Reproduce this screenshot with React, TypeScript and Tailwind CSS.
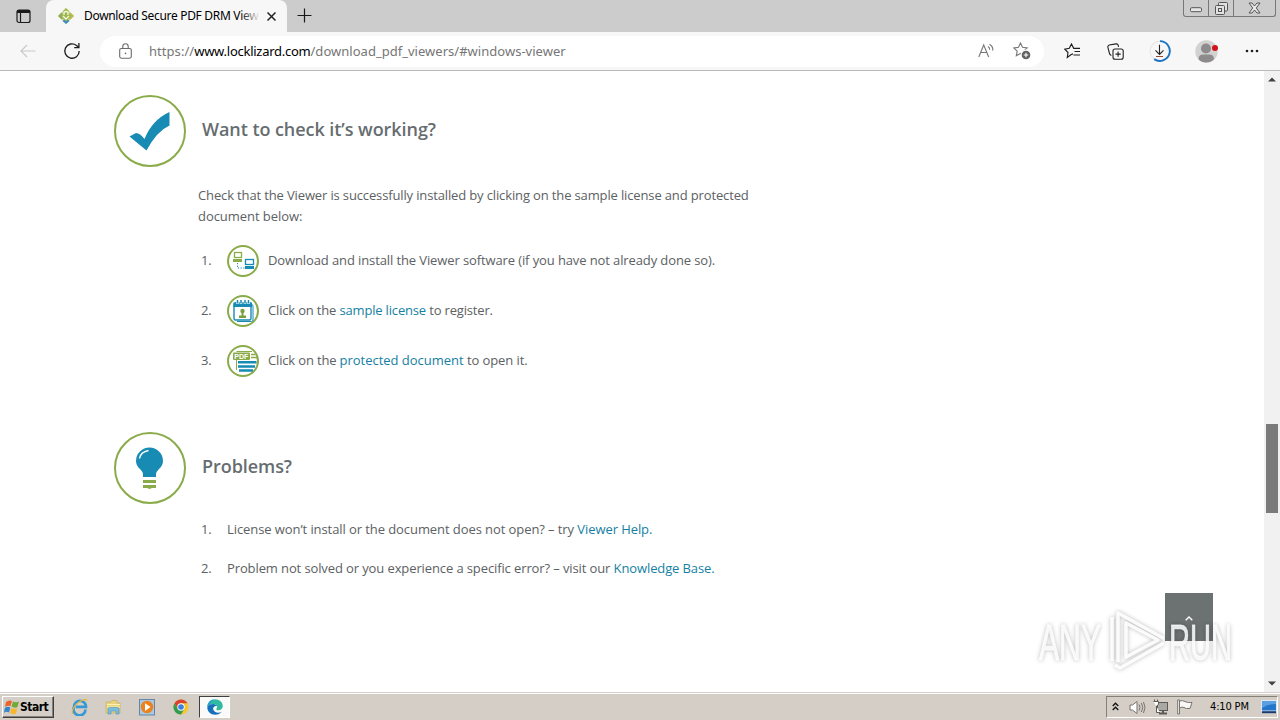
import React from "react";

const ui = "font-['Noto_Sans','Open_Sans',sans-serif]";
const tahoma = "font-['DejaVu_Sans_Condensed','DejaVu_Sans',sans-serif]";

function TabStrip() {
  return (
    <div className="flex h-8 shrink-0 bg-[#cccccc]">
      <div className="flex h-8 w-[46px] justify-end rounded-br-lg pr-[15px] pt-[9px]">
        <svg width="15" height="15" viewBox="0 0 15 15" fill="none" stroke="#1a1a1a" strokeWidth="1.2">
          <rect x="1" y="1" width="13" height="12.5" rx="2" />
          <path d="M1 2.500h13" strokeWidth="3" />
          <path d="M4.500 4v9" />
        </svg>
      </div>
      <div className="flex h-8 w-[241px] items-center rounded-t-lg bg-[#f7f7f7] pl-3">
        <svg width="16" height="16" viewBox="0 0 16 16" className="shrink-0">
          <path d="M8 0l8 8-8 8-8-8z" fill="#c5d493" />
          <path d="M8 0l3 3-3 3-3-3z" fill="#a5bd4c" />
          <path d="M3.500 4.500L7 8l-3.500 3.500L0 8z" fill="#8fae55" />
          <path d="M12.500 4.500L16 8l-3.500 3.500L9 8z" fill="#b9bf4d" />
          <path d="M8 10l3.500 3-3.500 3-3.500-3z" fill="#3d8cc0" />
          <path d="M8 2.500L13.500 8 8 13.500 2.500 8z" fill="#9cb653" />
          <path d="M6 7V5.500a2 2 0 014 0V7M5 8l3 3 3-3" stroke="#f4f7dc" strokeWidth="1.300" fill="none" />
        </svg>
        <div className={`relative ml-[10px] h-5 w-[176px] overflow-hidden whitespace-nowrap text-[12px] leading-[19px] tracking-[-0.32px] text-black ${ui}`}>
          Download Secure PDF DRM View
          <div className="absolute right-0 top-0 h-5 w-5 bg-gradient-to-r from-transparent to-[#f7f7f7]" />
        </div>
        <svg width="9" height="9" viewBox="0 0 9 9" stroke="#222" strokeWidth="1.500" className="ml-[7px] mt-px">
          <path d="M.5.5l8 8M8.500.5l-8 8" />
        </svg>
      </div>
      <div className="pl-[10px] pt-[8px]">
        <svg width="15" height="15" viewBox="0 0 15 15" stroke="#1a1a1a" strokeWidth="1.200">
          <path d="M7.500.5v14M.5 7.500h14" />
        </svg>
      </div>
      <div className="grow" />
      <div className="mr-1 flex h-[17px] w-[93px] rounded-b-[3px] border border-t-0 border-[#777] text-[#555]">
        <div className="flex w-[25px] items-center justify-center border-r border-[#777]">
          <svg width="13" height="6" viewBox="0 0 13 6" className="mt-1"><rect x=".5" y=".7" width="11" height="4" rx="1.200" fill="#e7e7e7" stroke="#555" /></svg>
        </div>
        <div className="flex w-[25px] items-center justify-center border-r border-[#777]">
          <svg width="13" height="13" viewBox="0 0 13 13" fill="#e2e2e2" stroke="#555">
            <rect x="3.500" y=".5" width="9" height="8.500" rx="1" />
            <rect x=".5" y="3.500" width="9" height="9" rx="1" />
            <rect x="3.500" y="6.500" width="3" height="3" />
          </svg>
        </div>
        <div className="flex grow items-center justify-center">
          <svg width="13" height="12" viewBox="0 0 13 12"><path d="M1 1h3l2.500 3L9 1h3L8.300 6l3.700 5H9L6.500 8 4 11H1l3.700-5z" fill="#e7e7e7" stroke="#555" /></svg>
        </div>
      </div>
    </div>
  );
}

const star = "M7.500 1l2 4.300 4.700.6-3.500 3.200.9 4.700-4.100-2.300-4.200 2.300.9-4.700L.8 5.900l4.700-.6z";

function Toolbar() {
  return (
    <div className="flex h-[39px] shrink-0 items-center border-b border-[#b9b9b9] bg-[#f7f7f7]">
      <svg width="16" height="14" viewBox="0 0 16 14" className="ml-5" fill="none" stroke="#c9c9c9" strokeWidth="1.200"><path d="M15.500 7H1M7 1L1 7l6 6" /></svg>
      <svg width="18" height="18" viewBox="0 0 18 18" className="ml-[27px]" fill="none" stroke="#1f1f1f" strokeWidth="1.300"><path d="M16.200 9A7.200 7.200 0 1 1 13.500 3.400L15.800 5.500M15.900 1v4.700h-4.700" /></svg>
      <div className="ml-[19px] flex h-[31px] w-[944px] items-center rounded-full bg-white pl-[19px]">
        <svg width="13" height="16" viewBox="0 0 13 16" fill="none" stroke="#6b6b6b" strokeWidth="1.100"><rect x=".7" y="5.500" width="11.600" height="9.700" rx="1.600" /><path d="M3.800 5.500V3.500a2.700 2.700 0 015.400 0v2" /><circle cx="6.500" cy="10.400" r=".8" fill="#6b6b6b" stroke="none" /></svg>
        <div className={`ml-[17px] w-[600px] whitespace-nowrap text-[13px] leading-5 text-[#767676] ${ui}`}>
          <span className="tracking-[0.05px]">https://</span>
          <span className="tracking-[-0.26px] text-black">www.locklizard.com</span>
          <span className="tracking-[0.02px]">/download_pdf_viewers/#windows-viewer</span>
        </div>
        <svg width="17" height="16" viewBox="0 0 17 16" className="ml-[229px]" fill="none" stroke="#777" strokeWidth="1.100"><path d="M.8 14L5.700 2l5 12M2.700 9.500h6.200M10 3.500q2 1.300 1.700 3.300M11.500 1.200q4 2.500 3.200 6.500" /></svg>
        <svg width="18" height="18" viewBox="0 0 18 18" className="ml-[18px]" fill="none" stroke="#777" strokeWidth="1.100"><path d={star} /><circle cx="13" cy="13" r="4.900" fill="#5f5f5f" stroke="#fff" /><path d="M13 10.700v4.600M10.700 13h4.600" stroke="#fff" /></svg>
      </div>
      <svg width="17" height="16" viewBox="0 0 17 16" className="ml-5" fill="none" stroke="#1f1f1f" strokeWidth="1.150"><path d="M9 10.900L7.200 11.500 3.300 14.500 4 9.500.8 6.200 5.300 5.300 7.500 1l2.200 4.300H16M10.500 8.500H16M9.500 12H16" /></svg>
      <svg width="17" height="17" viewBox="0 0 17 17" className="ml-[26px]" fill="none" stroke="#1f1f1f" strokeWidth="1.100"><rect x="6" y="6" width="10.200" height="10.200" rx="2" /><path d="M11.100 8.500v5.200M8.500 11.100h5.200M4.300 12.700L2.600 11 .9 4.300Q.6 2.600 2.200 2L9 .9q1.700-.3 2.200 1.300l.3 1.600" /></svg>
      <svg width="22" height="22" viewBox="0 0 22 22" className="ml-[25px]" fill="none"><circle cx="11" cy="11" r="9.900" stroke="#e7e7e7" strokeWidth="1.200" /><path d="M11 1.100a9.900 9.900 0 11-5.800 18" stroke="#1873c4" strokeWidth="1.900" /><path d="M10.500 4.700v9.500M6.500 10.400l4 4 4-4" stroke="#222" strokeWidth="1.100" /><path d="M7 16.500h7" stroke="#9c4539" /></svg>
      <svg width="24" height="23" viewBox="0 0 24 23" className="ml-[24px]"><circle cx="11.500" cy="11.500" r="11.200" fill="#d2d2d0" /><circle cx="11" cy="8.500" r="5" fill="#8d8b8c" /><path d="M3.500 19.200q0-4.700 4.500-4.700h6.500q4.500 0 4.500 4.700-3.500 3.300-8 3.300t-7.500-3.300z" fill="#8d8b8c" /><circle cx="20" cy="8" r="3" fill="#d3111c" /></svg>
      <svg width="14" height="4" viewBox="0 0 14 4" className="ml-[26px]" fill="#1d1d1d"><circle cx="2" cy="2" r="1.300" /><circle cx="7" cy="2" r="1.300" /><circle cx="12" cy="2" r="1.300" /></svg>
    </div>
  );
}

function Ring({ children }: { children: React.ReactNode }) {
  return (
    <svg width="32" height="32" viewBox="0 0 32 32" className="mr-[9px] shrink-0">
      <circle cx="16" cy="16" r="15" fill="#fff" stroke="#8aab49" strokeWidth="2" />
      {children}
    </svg>
  );
}

function Num({ n }: { n: number }) {
  return <span className="w-[26px] shrink-0 tracking-[-0.3px]">{n}.</span>;
}

function Link({ children }: { children: string }) {
  return <span className="text-[#167fa3]">{children}</span>;
}

function Page() {
  return (
    <main className="grow pl-[114px] pt-6 font-['Open_Sans',sans-serif] text-[13px] leading-[21px] text-[#5c6163]">
      <section className="h-[337px]">
        <div className="flex h-[72px] items-center">
          <svg width="72" height="72" viewBox="0 0 72 72">
            <circle cx="36" cy="36" r="35" fill="none" stroke="#8aab49" strokeWidth="2" />
            <path d="M15.500 41.500L22 38Q26 38 30.500 44 38 25 55.500 17V30.500Q43 36 32.500 55.500z" fill="#178bb3" />
          </svg>
          <h2 className="ml-4 pb-1 text-[18px] font-semibold leading-6 tracking-[-0.06px] text-[#666d70]">Want to check it’s working?</h2>
        </div>
        <p className="ml-[84px] mt-[18px] w-[580px] tracking-[-0.137px]">
          Check that the Viewer is successfully installed by clicking on the sample license and protected
          <br />
          <span className="tracking-[-0.05px]">document below:</span>
        </p>
        <ol className="ml-[87px] mt-[18px] flex flex-col gap-[18px]">
          <li className="flex h-8 items-center">
            <div className="pb-[2px]"><div className="flex w-[26px]"><Num n={1} /></div></div>
            <Ring>
              <g fill="none" stroke="#8aab49"><rect x="7.500" y="7.500" width="7" height="5" strokeWidth="1.300" /><path d="M6 15.500h9" strokeWidth="3" /></g>
              <g fill="none" stroke="#178bb3"><rect x="18.500" y="14.500" width="8" height="5" strokeWidth="1.300" /><path d="M18 22.500h9" strokeWidth="3" /><path d="M10.500 18v5H18" strokeDasharray="1.200 1.500" /></g>
            </Ring>
            <span className="pb-[2px] tracking-[-0.11px]">Download and install the Viewer software (if you have not already done so).</span>
          </li>
          <li className="flex h-8 items-center">
            <div className="pb-[2px]"><div className="flex w-[26px]"><Num n={2} /></div></div>
            <Ring>
              <rect x="7" y="8" width="17" height="17" rx="1.500" fill="#fff" stroke="#178bb3" strokeWidth="1.400" />
              <path d="M24.500 9.500q1.500 0 1.500 1.500v14q0 1.500-1.500 1.500H10" fill="none" stroke="#178bb3" />
              <path d="M6.500 7.500H25v4.500H6.500z" fill="#178bb3" />
              <path d="M10.500 4v5M14 4v5M18 4v5M21.500 4v5" stroke="#fff" strokeWidth="2.500" />
              <path d="M10.500 5v3.500M14 5v3.500M18 5v3.500M21.500 5v3.500" stroke="#178bb3" strokeWidth="1.500" />
              <circle cx="15.500" cy="16" r="2.200" fill="#7c9f3d" /><path d="M12 23v-2.500h2.500V18h2v2.500H19V23z" fill="#7c9f3d" />
            </Ring>
            <span className="whitespace-pre pb-[2px] tracking-[-0.17px]">Click on the <Link>sample license</Link> to register.</span>
          </li>
          <li className="flex h-8 items-center">
            <div className="pb-[2px]"><div className="flex w-[26px]"><Num n={3} /></div></div>
            <Ring>
              <path d="M9.500 14v11M9.500 6.500H25" stroke="#8aab49" fill="none" />
              <rect x="6" y="7.500" width="17" height="7.500" rx="1" fill="#8aab49" />
              <text x="7.300" y="13.700" fontSize="7" fontWeight="700" textLength="14" lengthAdjust="spacingAndGlyphs" fill="#fff" className="font-['Liberation_Sans',sans-serif]">PDF</text>
              <path d="M24 9.500h4.500M24 12.500h6" stroke="#8aab49" strokeWidth="1.300" />
              <path d="M11 17.300h18.500M11 21.500h17M12 25.500h14" stroke="#178bb3" strokeWidth="2.400" />
            </Ring>
            <span className="whitespace-pre pb-[2px] tracking-[-0.09px]"><span className="tracking-[-0.16px]">Click on the </span><span className="tracking-[-0.02px]"><Link>protected document</Link></span> to open it.</span>
          </li>
        </ol>
      </section>
      <section>
        <div className="flex h-[72px] items-center">
          <svg width="72" height="72" viewBox="0 0 72 72">
            <circle cx="36" cy="36" r="35" fill="none" stroke="#8aab49" strokeWidth="2" />
            <path d="M29 45v-3q0-2-3-5-4-3.500-4-8a13.500 13.500 0 0127 0q0 4.500-4 8-3 3-3 5v3z" fill="#178bb3" />
            <path d="M25.500 26.500q1-6.500 9-8" fill="none" stroke="#fff" strokeWidth="1.500" />
            <path d="M29 48h13v3H29zM29 53h13v3h-4l-2.500 1L33 56h-4z" fill="#8aab49" />
          </svg>
          <h2 className="ml-4 pb-1 text-[18px] font-semibold leading-6 tracking-[-0.06px] text-[#666d70]">Problems?</h2>
        </div>
        <ol className="ml-[87px] mt-[15px] flex flex-col gap-[18px]">
          <li className="flex"><Num n={1} /><span className="whitespace-pre tracking-[-0.08px]">License won’t install or the document does not open? – try <Link>Viewer Help.</Link></span></li>
          <li className="flex"><Num n={2} /><span className="whitespace-pre tracking-[-0.11px]">Problem not solved or you experience a specific error? – visit our <Link>Knowledge Base.</Link></span></li>
        </ol>
      </section>
    </main>
  );
}

function Scrollbar() {
  return (
    <div className="flex w-4 shrink-0 flex-col items-center bg-[#f1f1f1]">
      <svg width="8" height="5" viewBox="0 0 8 5" className="mt-[6px]"><path d="M0 4.500L4 .5l4 4z" fill="#404040" /></svg>
      <div className="mt-[342px] h-[89px] w-3 bg-[#7b7b7b]" />
      <div className="grow" />
      <svg width="8" height="5" viewBox="0 0 8 5" className="mb-[6px]"><path d="M0 0.500h8l-4 4z" fill="#404040" /></svg>
    </div>
  );
}

function Watermark() {
  return (
    <div className="absolute left-[1037px] top-[605px] h-[70px] w-[205px] drop-shadow-[0_0_2px_rgba(0,0,0,0.3)]">
      <svg width="205" height="70" viewBox="0 0 205 70" className="font-['Liberation_Sans_Narrow','Liberation_Sans',sans-serif]">
        <g fill="#ffffff" fillOpacity=".85" stroke="#fff" strokeOpacity=".7" strokeWidth="1" fontSize="50">
          <text x="2" y="55" textLength="62" lengthAdjust="spacingAndGlyphs">ANY</text>
          <text x="132" y="55" textLength="63" lengthAdjust="spacingAndGlyphs">RUN</text>
        </g>
        <g fill="none" stroke="#fff" strokeOpacity=".9" strokeWidth="3.500" strokeLinejoin="round">
          <path d="M89 18l32 17-32 17z" />
          <path d="M81 57V8l46 25.500" />
          <path d="M127 38L83 63l-5-3" />
          <path d="M75 12v44" />
        </g>
      </svg>
    </div>
  );
}

function Taskbar() {
  return (
    <div className="flex h-[28px] shrink-0 items-center border-t border-[#d5d1ca] bg-[#d4cec6] pt-px shadow-[inset_0_1px_0_#fff]">
      <div className="ml-[2px] flex h-[22px] w-[52px] items-center border border-b-[#404040] border-l-white border-r-[#404040] border-t-white pl-px shadow-[inset_-1px_-1px_0_#858078]">
        <svg width="16" height="16" viewBox="0 0 16 16" className="shrink-0"><path d="M2 3q3-2.500 6-1L6.500 7q-3-1-5.500 1z" fill="#eb622b" /><path d="M9 2.500q3 1.500 6 0L13.500 8q-3 1.500-6-.5z" fill="#72aa3a" /><path d="M.8 9q3-2 5.500-.5L5 13.500q-3-1.500-5 .5z" fill="#3285cd" /><path d="M7.300 9q3 1.500 6 .2L12 14.500q-3 1.500-6-.5z" fill="#f8b62c" /></svg>
        <span className={`text-[12px] font-bold tracking-[-0.5px] text-black ${tahoma}`}>Start</span>
      </div>
      <svg width="18" height="18" viewBox="0 0 18 18" className="ml-[17px]" fill="none"><path d="M14.500 11.500A6 6 0 113 9a6 6 0 0112-.2H5" stroke="#3699d6" strokeWidth="2.700" /><path d="M2 16C-1 12 6 4 12 2q4-1.500 4 1" stroke="#e6b93b" strokeWidth="1.200" /></svg>
      <svg width="17" height="16" viewBox="0 0 17 16" className="ml-[16px]"><path d="M1 3h5l1-1.500h5V4h3v10H1z" fill="#e8d37d" stroke="#c4a958" strokeWidth=".6" /><path d="M2 5.500h13M2 8h13" stroke="#fff3b3" /><path d="M3 15V10q0-1.500 1.500-1.500h8Q14 8.500 14 10v5h-3v-3H6v3z" fill="#78bce0" stroke="#4c92bc" strokeWidth=".6" /></svg>
      <svg width="16" height="17" viewBox="0 0 16 17" className="ml-[17px]"><rect x=".5" y=".5" width="15" height="15.500" fill="#a9c8e1" stroke="#6587a4" /><circle cx="8" cy="8" r="6.200" fill="#ed821c" /><path d="M6 4.200l5.500 3.800L6 12z" fill="#fff" /></svg>
      <svg width="16" height="16" viewBox="0 0 16 16" className="ml-[18px]"><circle cx="8" cy="8" r="7.500" fill="#f4c72f" /><path d="M1.500 4.200A7.500 7.500 0 0114.500 4.300H8L5 10z" fill="#d94431" /><path d="M1.500 4.200A7.500 7.500 0 008 15.500L11.200 10H5z" fill="#329b51" /><circle cx="8" cy="8" r="3.700" fill="#fff" /><circle cx="8" cy="8" r="2.800" fill="#3b7fe1" /></svg>
      <div className="ml-[10px] flex h-[22px] w-[31px] items-center justify-center border border-b-white border-l-[#404040] border-r-white border-t-[#404040] bg-[#fbfaf8]">
        <svg width="16" height="16" viewBox="0 0 16 16"><path d="M.3 8.500C.3 3 4 .3 8 .3c4.500 0 7.800 3 7.700 6.700 0 3-2.500 4.200-4.500 4.200-1.700 0-2.200-.7-1.700-1.500 1.500-2.500-.3-4.700-3-4.700C3.500 5 1 6.500.3 8.500z" fill="#2fbb9f" /><path d="M.3 8.500C.5 3 4 .3 7 .4 5 2 4 3 2.500 5.500 1 6.500.5 7.500.3 8.500z" fill="#2a9fd8" /><path d="M.3 8.500C1 6 3.500 5 6.500 5c1.500 0 3 1 3.500 2-3-.5-4.500 2-3.500 4 1.500 3 5.500 3.500 8.500 1.500-1.500 2-4 3.300-7 3.300C3.500 15.700.3 12.500.3 8.500z" fill="#1670bd" /></svg>
      </div>
      <div className="grow" />
      <div className="mr-[2px] flex h-[22px] w-[172px] items-center border border-b-white border-l-[#858078] border-r-white border-t-[#858078]">
        <svg width="7" height="9" viewBox="0 0 7 9" className="ml-[5px] -mt-[2px]" fill="none" stroke="#111" strokeWidth="1.300"><path d="M.7 4l2.800-2.800L6.300 4M.7 8l2.800-2.800L6.300 8" /></svg>
        <svg width="17" height="15" viewBox="0 0 17 15" className="ml-[10px]" fill="none" stroke="#77736e"><path d="M1 5h2.500L8 1.500v12L3.500 10H1z" fill="#fff" /><path d="M10 4.500q2 3 0 6M12.300 3q3 4.500 0 9M14.500 2q3 5.500 0 11" /></svg>
        <svg width="17" height="16" viewBox="0 0 17 16" className="ml-[6px]" fill="#fff" stroke="#5e5b57"><rect x="5.500" y="3.500" width="10" height="8" fill="#aaa8a4" /><path d="M7 14.500h8M11 12v2" strokeWidth="2" /><path d="M1.500 2.500h5v3L4.500 7v6.500H8M2.500.5v2M5.500.5v2" /></svg>
        <svg width="16" height="16" viewBox="0 0 16 16" className="ml-[8px]" fill="#f8f7f5" stroke="#77736e"><path d="M.7 1h1.800v14H.7zM2.500 2q3-1 5.500.5Q11 4 15 3.500L13 9.500Q9 10 7 8.500 5 7.500 2.500 9z" /></svg>
        <span className={`ml-[17px] w-[40px] whitespace-nowrap pt-px text-[11px] tracking-[-0.15px] text-black ${tahoma}`}>4:10 PM</span>
        <svg width="16" height="14" viewBox="0 0 16 14" className="ml-[11px]"><rect x=".5" y=".5" width="15" height="10.500" fill="#2376c9" stroke="#dceaf6" /><path d="M1 1h14v3Q7 4 1 8z" fill="#5b9fe0" /><path d="M1 12.200h14" stroke="#183c70" strokeWidth="2" /></svg>
      </div>
    </div>
  );
}

export default function App() {
  return (
    <div className="relative flex h-[720px] w-[1280px] flex-col overflow-hidden bg-white">
      <TabStrip />
      <Toolbar />
      <div className="flex h-[621px] shrink-0">
        <Page />
        <Scrollbar />
      </div>
      <Taskbar />
      <div className="absolute left-[1165px] top-[593px] flex h-12 w-12 items-center justify-center bg-[#6c7172]">
        <svg width="8" height="5" viewBox="0 0 8 5" className="mt-[3px]" fill="none" stroke="#fff" strokeWidth="1.400"><path d="M.7 4.300L4 1l3.300 3.300" /></svg>
      </div>
      <Watermark />
    </div>
  );
}
